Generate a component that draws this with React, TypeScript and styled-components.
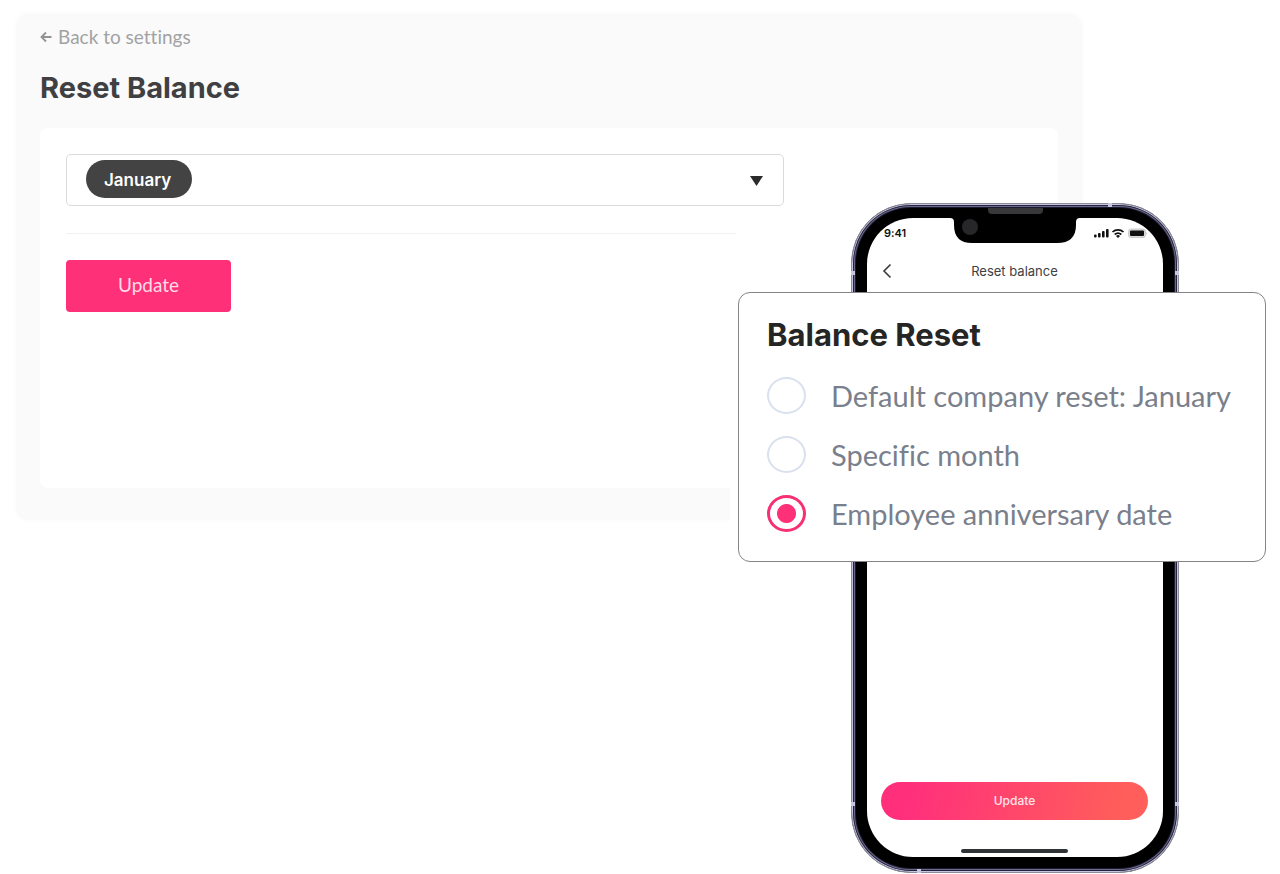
import React from "react";
import styled, { createGlobalStyle } from "styled-components";

const Global = createGlobalStyle`
  * { box-sizing: border-box; }
  body { margin: 0; background: #fff; font-family: Lato, "Liberation Sans", sans-serif; color: #404042; font-variant-ligatures: none; }
  button, input, select { font-family: inherit; }
`;

const wideFont = `Inter, "Liberation Sans", sans-serif`;

const Stage = styled.main`
  display: grid;
  grid-template-columns: minmax(0, 1fr);
  align-items: start;
`;

const SettingsPanel = styled.section`
  grid-area: 1 / 1;
  margin: 14px 198px 0 16px;
  padding: 12px 24px 32px;
  background: #fafafa;
  border-radius: 12px;
  box-shadow: 0 0 6px #fafafa;
`;

const BackLink = styled.a`
  display: flex;
  align-items: center;
  gap: 6px;
  color: #a2a2a3;
  font-size: 19px;
  line-height: 22px;
  text-decoration: none;
`;

const PageTitle = styled.h1`
  margin: 21px 0 21px;
  font-family: ${wideFont};
  font-size: 29px;
  font-weight: 700;
  line-height: 38px;
`;

const SettingsCard = styled.form`
  height: 360px;
  padding: 26px;
  background: #fff;
  border-radius: 8px;
`;

const MonthField = styled.label`
  display: flex;
  align-items: center;
  justify-content: space-between;
  width: 75%;
  max-width: 718px;
  height: 52px;
  padding: 0 19px;
  border: 1px solid #dadadb;
  border-radius: 5px;
`;

const MonthSelect = styled.select`
  appearance: none;
  width: 106px;
  height: 38px;
  margin-bottom: 2px;
  padding: 1px 18px 0;
  border: 0;
  border-radius: 19px;
  background: #434344;
  color: #fff;
  font-family: ${wideFont};
  font-size: 17px;
  font-weight: 600;
`;

const Rule = styled.hr`
  width: 670px;
  margin: 27px 0 26px;
  border: 0;
  border-top: 1px solid #f1f1f1;
`;

const UpdateButton = styled.button`
  width: 165px;
  height: 52px;
  padding: 0 0 4px;
  border: 0;
  border-radius: 4px;
  background: #fe3077;
  color: #ffdce8;
  font-size: 19px;
`;

const MobilePreview = styled.section`
  grid-area: 1 / 1;
  justify-self: end;
  display: grid;
  grid-template-columns: 528px;
  align-items: start;
  margin: 203px 14px 0 0;
`;

const Phone = styled.div`
  grid-area: 1 / 1;
  position: relative;
  width: 328px;
  height: 670px;
  margin-left: 113px;
  padding: 14px 15px 15px;
  border: 1px solid #8d8c9e;
  border-radius: 60px;
  background: #000;
  box-shadow: inset 0 0 0 1px #c6c5dc, inset 0 0 0 2px #26243c, inset 0 0 0 3px #6c6a8c, inset 0 0 0 4px #1b1a30;
`;

const Antenna = styled.i<{ $side: "left" | "right" | "top" | "bottom"; $at: number }>`
  position: absolute;
  width: 4px;
  height: 4px;
  background: #c9c9dd;
  ${(p) => `${p.$side}: -1px; ${p.$side === "left" || p.$side === "right" ? "top" : "left"}: ${p.$at}px;`}
`;

const Speaker = styled.i`
  position: absolute;
  top: 4px;
  left: 136px;
  width: 55px;
  height: 6px;
  border-radius: 0 0 4px 4px;
  background: #38383a;
`;

const Notch = styled.svg`
  position: absolute;
  top: 13px;
  left: 98px;
`;

const Screen = styled.div`
  display: flex;
  flex-direction: column;
  height: 100%;
  padding: 6px 15px 4px 14px;
  border-radius: 46px;
  background: #fff;
  overflow: hidden;
`;

const StatusBar = styled.div`
  display: flex;
  align-items: center;
  justify-content: space-between;
  height: 18px;
  padding-left: 3px;
  color: #111;
  font-family: ${wideFont};
  font-size: 11px;
  font-weight: 600;
`;

const AppBar = styled.header`
  display: grid;
  grid-template-columns: 20px 1fr 20px;
  align-items: center;
  height: 20px;
  margin-top: 19px;
`;

const IconButton = styled.button`
  display: flex;
  padding: 0;
  border: 0;
  background: none;
`;

const AppTitle = styled.h2`
  margin: 0;
  text-align: center;
  font-family: ${wideFont};
  font-size: 13px;
  line-height: 20px;
  font-weight: 400;
`;

const PillButton = styled.button`
  height: 38px;
  margin-top: auto;
  padding: 0 0 2px;
  border: 0;
  border-radius: 19px;
  background: linear-gradient(100deg, #ff2f7c 10%, #ff5e5a 90%);
  color: #ffe6ea;
  font-family: ${wideFont};
  font-size: 12px;
  font-weight: 500;
`;

const HomeBar = styled.div`
  width: 107px;
  height: 4px;
  margin: 29px auto 0;
  border-radius: 2px;
  background: #303336;
`;

const ResetCard = styled.fieldset`
  grid-area: 1 / 1;
  position: relative;
  margin: 89px 0 0;
  height: 270px;
  padding: 22px 28px;
  border: 1px solid #848486;
  border-radius: 12px;
  background: #fff;
  box-shadow: -8px 0 0 #fff;
`;

const ResetTitle = styled.legend`
  float: left;
  width: 100%;
  margin-bottom: 11px;
  padding: 0;
  color: #252526;
  font-family: ${wideFont};
  font-size: 31px;
  font-weight: 700;
  line-height: 40px;
`;

const Option = styled.label`
  clear: both;
  display: flex;
  align-items: center;
  gap: 25px;
  height: 59px;
  color: #7a7f8c;
  font-size: 29px;
  line-height: 36px;
  white-space: nowrap;
`;

const Radio = styled.input`
  appearance: none;
  flex: none;
  width: 39px;
  height: 37px;
  margin: 0;
  border: 2px solid #d9e0ee;
  border-radius: 50%;
  background: #fff;
  &:checked {
    border: 3px solid #f72f74;
    background: radial-gradient(circle, #fe3077 9px, #fff 10px);
  }
`;

const OPTIONS = ["Default company reset: January", "Specific month", "Employee anniversary date"];

const MONTHS = ["January", "February", "March", "April", "May", "June", "July", "August", "September", "October", "November", "December"];

function StatusIcons() {
  return (
    <svg width="54" height="12" viewBox="0 0 54 12" fill="#111" aria-hidden="true">
      <rect x="0" y="7.500" width="2.600" height="3" rx="1" />
      <rect x="4" y="6" width="2.600" height="4.500" rx="1" />
      <rect x="8" y="4" width="2.600" height="6.500" rx="1" />
      <rect x="12" y="2" width="2.600" height="8.500" rx="1" />
      <g fill="none" stroke="#111" strokeWidth="1.700">
        <path d="M18.500 5a8 8 0 0 1 11 0" />
        <path d="M20.700 7.500a5 5 0 0 1 6.600 0" />
      </g>
      <path d="M24 11l-2-2a3 3 0 0 1 4 0z" />
      <rect x="34.500" y="2" width="17" height="8.500" rx="2.500" fill="#ddd" stroke="#ccc" />
      <rect x="36" y="3.500" width="14" height="5.600" rx="1" />
      <path d="M52.500 5q1.500 1.500 0 3z" fill="#bbb" />
    </svg>
  );
}

export default function App() {
  return (
    <>
      <Global />
      <Stage>
        <SettingsPanel>
          <BackLink href="#settings">
            <svg width="12" height="12" viewBox="0 0 12 12" fill="none" stroke="#929293" strokeWidth="1.800" aria-hidden="true">
              <path d="M6 1.500L1.500 6L6 10.500M1.500 6H11.500" />
            </svg>
            Back to settings
          </BackLink>
          <PageTitle>Reset Balance</PageTitle>
          <SettingsCard onSubmit={(e) => e.preventDefault()}>
            <MonthField>
              <MonthSelect aria-label="Reset month" defaultValue="January">
                {MONTHS.map((m) => (
                  <option key={m}>{m}</option>
                ))}
              </MonthSelect>
              <svg width="14" height="12" viewBox="0 0 14 12" fill="#2b2b2c" aria-hidden="true">
                <path d="M0 2h13L6.500 12z" />
              </svg>
            </MonthField>
            <Rule />
            <UpdateButton type="submit">Update</UpdateButton>
          </SettingsCard>
        </SettingsPanel>
        <MobilePreview>
          <Phone>
            <Antenna $side="left" $at={67} />
            <Antenna $side="right" $at={67} />
            <Antenna $side="left" $at={598} />
            <Antenna $side="right" $at={598} />
            <Antenna $side="top" $at={256} />
            <Antenna $side="bottom" $at={65} />
            <Screen>
              <StatusBar>
                <span>9:41</span>
                <StatusIcons />
              </StatusBar>
              <AppBar>
                <IconButton aria-label="Back">
                  <svg width="12" height="16" viewBox="0 0 12 16" fill="none" stroke="#3a3a3c" strokeWidth="1.600" aria-hidden="true">
                    <path d="M9.500 1.500L3 8L9.500 14.500" />
                  </svg>
                </IconButton>
                <AppTitle>Reset balance</AppTitle>
              </AppBar>
              <PillButton>Update</PillButton>
              <HomeBar />
            </Screen>
            <Notch width="130" height="28" viewBox="0 0 130 28" aria-hidden="true">
              <path d="M0 0H130V1Q126 1 126 5V8Q126 26 107 26H22Q4 26 4 8V5Q4 1 0 1z" />
              <circle cx="20" cy="10" r="8" fill="#27272a" />
            </Notch>
            <Speaker />
          </Phone>
          <ResetCard>
            <ResetTitle>Balance Reset</ResetTitle>
            {OPTIONS.map((text, i) => (
              <Option key={text}>
                <Radio type="radio" name="reset" defaultChecked={i === 2} />
                {text}
              </Option>
            ))}
          </ResetCard>
        </MobilePreview>
      </Stage>
    </>
  );
}
